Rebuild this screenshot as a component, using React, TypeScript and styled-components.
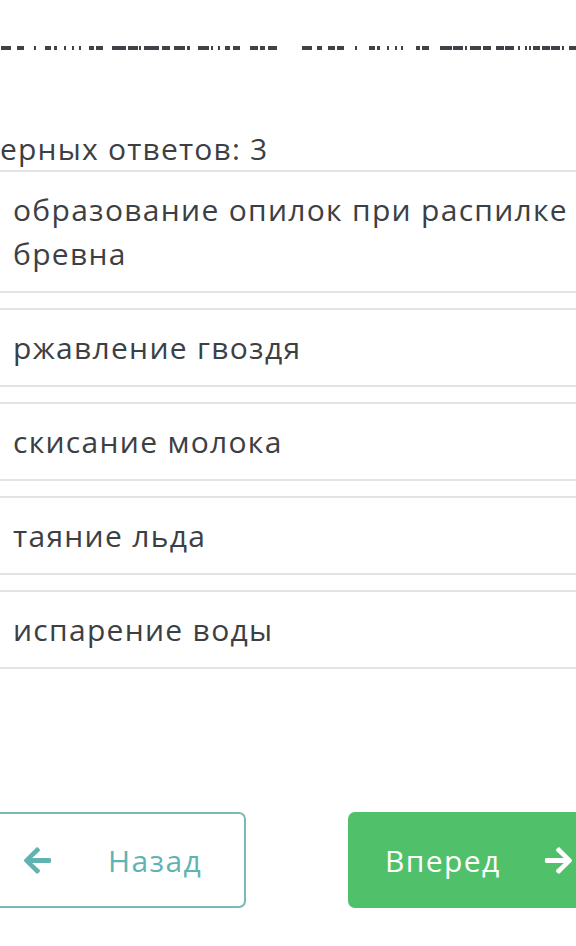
import React from "react"
import styled, { createGlobalStyle } from "styled-components"
import { FaArrowLeft, FaArrowRight } from "react-icons/fa"

const answers = [
    "образование опилок при распилке бревна",
    "ржавление гвоздя",
    "скисание молока",
    "таяние льда",
    "испарение воды",
]

// bottoms of the cut-off line of text above the header: [x, width]
const dashes: [number, number][] = [
    [1, 10], [17, 7], [34, 2], [45, 6], [54, 3], [64, 2], [72, 2], [79, 2], [89, 5], [96, 7],
    [112, 14], [128, 10], [139, 2], [144, 15], [162, 8], [174, 11], [187, 3], [198, 11], [211, 2],
    [218, 2], [225, 5], [233, 7], [250, 8], [260, 5], [268, 9], [302, 10], [317, 5], [328, 7],
    [337, 7], [355, 2], [369, 6], [377, 3], [387, 2], [395, 2], [401, 2], [416, 4], [422, 7],
    [440, 12], [453, 10], [465, 2], [470, 11], [483, 8], [496, 8], [505, 9], [518, 2], [525, 2],
    [529, 2], [533, 7], [542, 8], [551, 9], [562, 2], [569, 7],
]

const App: React.FC = () => {
    return (
        <Page>
            <GlobalStyle />
            <Strip width="576" height="4" viewBox="0 0 576 4">
                {dashes.map(([x, w]) => (
                    <rect key={x} x={x} y={0} width={w} height={4} fill="#3d4349" />
                ))}
            </Strip>
            <Header>ерных ответов: 3</Header>
            <List>
                {answers.map(a => (
                    <Answer key={a}>{a}</Answer>
                ))}
            </List>
            <Actions>
                <BackButton>
                    <FaArrowLeft />
                    <span>Назад</span>
                </BackButton>
                <NextButton>
                    <span>Вперед</span>
                    <FaArrowRight />
                </NextButton>
            </Actions>
        </Page>
    )
}

export default App

const GlobalStyle = createGlobalStyle`
    body {
        margin: 0;
        background: #fff;
        font-family: "Open Sans", "Noto Sans", sans-serif;
        overflow: hidden;
    }
`
const Page = styled.div`
    width: 576px;
    height: 946px;
    overflow: hidden;
    display: flex;
    flex-direction: column;
`
const Strip = styled.svg`
    display: block;
    margin-top: 46px;
`
const Header = styled.div`
    margin-top: 81px;
    font-size: 30px;
    line-height: 36px;
    letter-spacing: 1.2px;
    color: #3c4044;
    margin-bottom: 3px;
    white-space: nowrap;
`
const List = styled.div`
    display: flex;
    flex-direction: column;
    gap: 14.5px;
`
const Answer = styled.div`
    border-top: 2px solid #e3e3e3;
    border-bottom: 2px solid #e3e3e3;
    padding: 16px 0 16px 13px;
    font-size: 30px;
    line-height: 43.5px;
    letter-spacing: 1.3px;
    color: #3c4044;
`
const Actions = styled.div`
    margin-top: 143px;
    display: flex;
    justify-content: space-between;
    height: 96px;
`
const BaseButton = styled.div`
    box-sizing: border-box;
    height: 96px;
    border-radius: 7px;
    display: flex;
    align-items: center;
    font-size: 30px;
    letter-spacing: 1.4px;
    & svg {
        width: 31px;
        height: 31px;
    }
`
const BackButton = styled(BaseButton)`
    margin-left: -40px;
    width: 286px;
    border: 2px solid #78bab8;
    color: #5fb4b3;
    padding-left: 60px;
    gap: 55px;
`
const NextButton = styled(BaseButton)`
    margin-right: -70px;
    width: 298px;
    background: #50c16a;
    color: #fff;
    padding-left: 37px;
    gap: 42px;
`
